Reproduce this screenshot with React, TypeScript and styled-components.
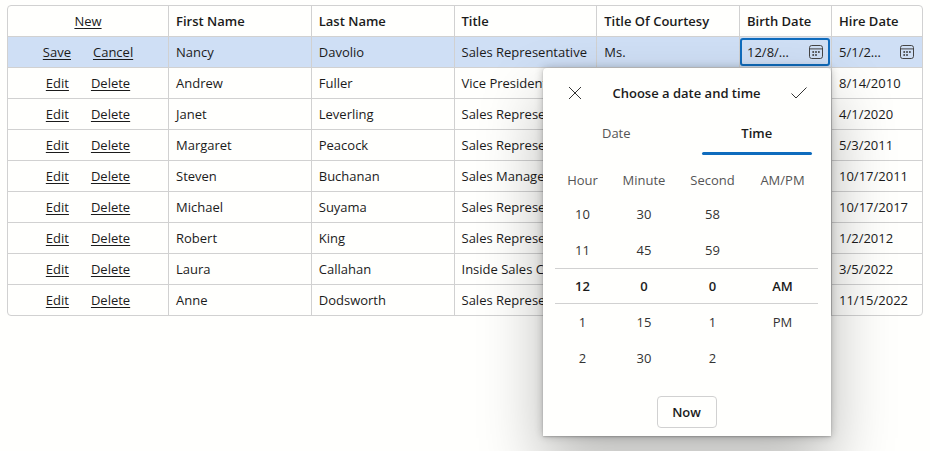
import React, { useState } from "react";
import styled, { createGlobalStyle, css } from "styled-components";

const line = "#d1d1d1";
const accent = "#0f6cbd";
const surface = "#fffffd";

const GlobalStyle = createGlobalStyle`
  * { box-sizing: border-box; }
  body {
    margin: 0;
    background: ${surface};
    color: #1b1b1b;
    font: 13px/20px "Open Sans", "Noto Sans", sans-serif;
  }
  button, input { font: inherit; color: inherit; }
`;

const Page = styled.main`
  min-height: 100vh;
  padding: 5px 7px;
`;

const GridFrame = styled.div`
  border: 1px solid ${line};
  border-radius: 4px;
`;

const Table = styled.table`
  width: 100%;
  table-layout: fixed;
  border-collapse: separate;
  border-spacing: 0;
`;

const Col = styled.col<{ $width?: number }>`
  ${(p) => p.$width && css`width: ${p.$width}px;`}
`;

const Row = styled.tr<{ $editing?: boolean }>`
  background: ${(p) => (p.$editing ? "#cfdff5" : "transparent")};
`;

const cell = css`
  height: 31px;
  padding: 0 7px;
  text-align: left;
  white-space: nowrap;
`;

const HeadCell = styled.th`
  ${cell}
  height: 30px;
  font-weight: 600;
  & + th { border-left: 1px solid ${line}; }
`;

const Cell = styled.td`
  ${cell}
  border-top: 1px solid ${line};
  & + td { border-left: 1px solid ${line}; }
`;

const EditorCell = styled(Cell)`
  position: relative;
  padding: 0 1px 0 0;
`;

const Commands = styled.div`
  display: flex;
  justify-content: center;
  gap: 22px;
  font-weight: 400;
`;

const CommandLink = styled.a`
  color: inherit;
  text-decoration: underline;
  text-underline-offset: 2px;
`;

const DateBox = styled.label<{ $focused?: boolean }>`
  display: flex;
  align-items: center;
  justify-content: space-between;
  height: 28px;
  padding: 0 5px;
  border: 2px solid ${(p) => (p.$focused ? accent : "transparent")};
  border-radius: 3px;
`;

const DateInput = styled.input`
  width: 48px;
  padding: 0;
  border: 0;
  outline: 0;
  background: transparent;
  text-overflow: ellipsis;
`;

const IconButton = styled.button`
  display: flex;
  padding: 0;
  border: 0;
  background: transparent;
  cursor: pointer;
`;

const Popup = styled.section`
  position: absolute;
  z-index: 10;
  top: 100%;
  right: 0;
  width: 288px;
  margin-top: 1px;
  padding: 8px 13px 8px 12px;
  border-radius: 4px 4px 0 0;
  background: ${surface};
  box-shadow: 0 0 8px rgba(0, 0, 0, 0.24), 0 32px 64px rgba(0, 0, 0, 0.28),
    0 1px 2px rgba(0, 0, 0, 0.2);
`;

const PopupHeader = styled.header`
  display: flex;
  align-items: center;
  justify-content: space-between;
  height: 34px;
  padding: 0 11px 0 13px;
`;

const PopupTitle = styled.h2`
  margin: 0;
  font-size: 13px;
  font-weight: 600;
`;

const Tabs = styled.div`
  display: grid;
  grid-template-columns: 1fr 1fr;
  gap: 30px;
  padding: 0 6px;
`;

const Tab = styled.button<{ $active?: boolean }>`
  position: relative;
  height: 45px;
  padding: 0;
  border: 0;
  background: transparent;
  color: ${(p) => (p.$active ? "#1b1b1b" : "#555")};
  font-weight: ${(p) => (p.$active ? 600 : 400)};
  cursor: pointer;
  ${(p) =>
    p.$active &&
    css`
      &::after {
        content: "";
        position: absolute;
        inset: auto 0 0;
        height: 3px;
        border-radius: 2px;
        background: ${accent};
      }
    `}
`;

const Spinner = styled.div`
  display: grid;
  grid-template-columns: 55fr 68fr 69fr 71fr;
  margin-top: 8px;
`;

const SpinnerColumn = styled.div`
  text-align: center;
`;

const SpinnerLabel = styled.div`
  height: 33px;
  line-height: 34px;
  color: #555;
`;

const Option = styled.button<{ $selected?: boolean }>`
  display: block;
  width: 100%;
  height: 36px;
  padding: 0;
  border: 0 solid ${line};
  border-width: ${(p) => (p.$selected ? "1px 0" : "0")};
  background: transparent;
  font-weight: ${(p) => (p.$selected ? 600 : 400)};
  color: ${(p) => (p.$selected ? "#1b1b1b" : "#333")};
  cursor: pointer;
`;

const Blank = styled.div`
  height: 36px;
`;

const PopupFooter = styled.footer`
  display: flex;
  justify-content: center;
  padding-top: 20px;
`;

const NowButton = styled.button`
  width: 60px;
  height: 32px;
  padding: 0;
  border: 1px solid ${line};
  border-radius: 4px;
  background: ${surface};
  font-weight: 600;
  cursor: pointer;
`;

const CalendarIcon = () => (
  <svg width="14" height="14" viewBox="0 0 14 14" fill="none" aria-hidden="true">
    <rect x="0.5" y="0.5" width="13" height="13" rx="2.2" stroke="#444" />
    <path d="M0.5 3.9h13" stroke="#444" />
    <g fill="#444">
      <circle cx="4.2" cy="7" r="1" />
      <circle cx="7" cy="7" r="1" />
      <circle cx="9.9" cy="7" r="1" />
      <circle cx="4.2" cy="9.9" r="1" />
      <circle cx="7" cy="9.9" r="1" />
    </g>
  </svg>
);

const CloseIcon = () => (
  <svg width="14" height="14" viewBox="0 0 14 14" fill="none" aria-hidden="true">
    <path d="M1 1l12 12M13 1L1 13" stroke="#333" />
  </svg>
);

const CheckIcon = () => (
  <svg width="16" height="14" viewBox="0 0 16 14" fill="none" aria-hidden="true">
    <path d="M0.5 7.5l4.5 4.5L15.5 1.5" stroke="#333" />
  </svg>
);

const columns = [
  "First Name",
  "Last Name",
  "Title",
  "Title Of Courtesy",
  "Birth Date",
  "Hire Date",
];

const employees = [
  ["Andrew", "Fuller", "Vice President", "", "", "8/14/2010"],
  ["Janet", "Leverling", "Sales Representative", "", "", "4/1/2020"],
  ["Margaret", "Peacock", "Sales Representative", "", "", "5/3/2011"],
  ["Steven", "Buchanan", "Sales Manager", "", "", "10/17/2011"],
  ["Michael", "Suyama", "Sales Representative", "", "", "10/17/2017"],
  ["Robert", "King", "Sales Representative", "", "", "1/2/2012"],
  ["Laura", "Callahan", "Inside Sales Coordinator", "", "", "3/5/2022"],
  ["Anne", "Dodsworth", "Sales Representative", "", "", "11/15/2022"],
];

const timeColumns = [
  { label: "Hour", options: ["10", "11", "12", "1", "2"] },
  { label: "Minute", options: ["30", "45", "0", "15", "30"] },
  { label: "Second", options: ["58", "59", "0", "1", "2"] },
  { label: "AM/PM", options: ["", "", "AM", "PM"] },
];

function DateField(props: { label: string; initial: string; focused?: boolean }) {
  const [value, setValue] = useState(props.initial);
  return (
    <DateBox $focused={props.focused}>
      <DateInput
        aria-label={props.label}
        value={value}
        onChange={(e) => setValue(e.target.value)}
      />
      <IconButton type="button" aria-label={`Open ${props.label} picker`}>
        <CalendarIcon />
      </IconButton>
    </DateBox>
  );
}

function DateTimePopup() {
  return (
    <Popup role="dialog" aria-label="Choose a date and time">
      <PopupHeader>
        <IconButton type="button" aria-label="Close">
          <CloseIcon />
        </IconButton>
        <PopupTitle>Choose a date and time</PopupTitle>
        <IconButton type="button" aria-label="Apply">
          <CheckIcon />
        </IconButton>
      </PopupHeader>
      <Tabs role="tablist">
        <Tab role="tab" aria-selected={false}>Date</Tab>
        <Tab role="tab" aria-selected $active>Time</Tab>
      </Tabs>
      <Spinner>
        {timeColumns.map((column) => (
          <SpinnerColumn key={column.label}>
            <SpinnerLabel>{column.label}</SpinnerLabel>
            {column.options.map((option, i) =>
              option ? (
                <Option key={i} type="button" $selected={i === 2}>{option}</Option>
              ) : (
                <Blank key={i} />
              )
            )}
          </SpinnerColumn>
        ))}
      </Spinner>
      <PopupFooter>
        <NowButton type="button">Now</NowButton>
      </PopupFooter>
    </Popup>
  );
}

export default function App() {
  return (
    <Page>
      <GlobalStyle />
      <GridFrame>
        <Table>
          <colgroup>
            <Col $width={160} />
            <Col />
            <Col />
            <Col />
            <Col />
            <Col $width={92} />
            <Col $width={91} />
          </colgroup>
          <thead>
            <tr>
              <HeadCell>
                <Commands>
                  <CommandLink href="#new">New</CommandLink>
                </Commands>
              </HeadCell>
              {columns.map((name) => (
                <HeadCell key={name} scope="col">{name}</HeadCell>
              ))}
            </tr>
          </thead>
          <tbody>
            <Row $editing>
              <Cell>
                <Commands>
                  <CommandLink href="#save">Save</CommandLink>
                  <CommandLink href="#cancel">Cancel</CommandLink>
                </Commands>
              </Cell>
              <Cell>Nancy</Cell>
              <Cell>Davolio</Cell>
              <Cell>Sales Representative</Cell>
              <Cell>Ms.</Cell>
              <EditorCell>
                <DateField label="Birth Date" initial="12/8/1988 12:00 AM" focused />
                <DateTimePopup />
              </EditorCell>
              <EditorCell>
                <DateField label="Hire Date" initial="5/1/2010 12:00 AM" />
              </EditorCell>
            </Row>
            {employees.map((employee) => (
              <Row key={employee[0]}>
                <Cell>
                  <Commands>
                    <CommandLink href="#edit">Edit</CommandLink>
                    <CommandLink href="#delete">Delete</CommandLink>
                  </Commands>
                </Cell>
                {employee.map((value, i) => (
                  <Cell key={i}>{value}</Cell>
                ))}
              </Row>
            ))}
          </tbody>
        </Table>
      </GridFrame>
    </Page>
  );
}
